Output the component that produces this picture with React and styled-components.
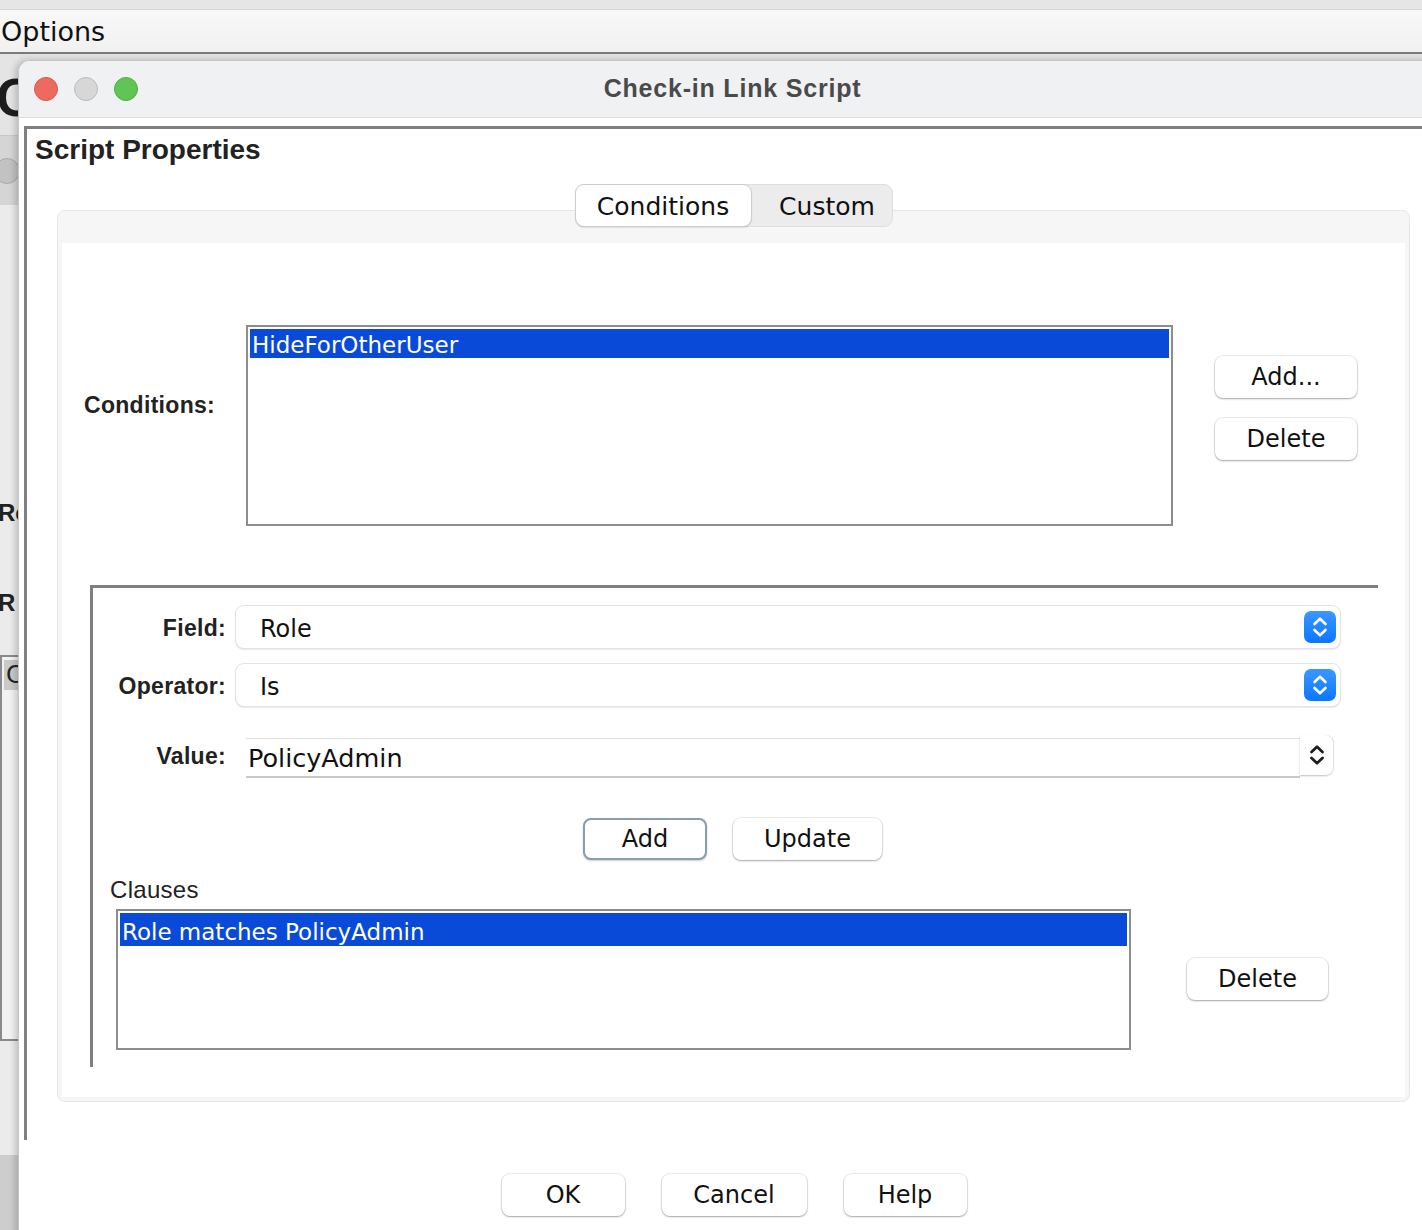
import React from 'react';
import styled, { createGlobalStyle, css } from 'styled-components';

const Global = createGlobalStyle`
  html, body { margin: 0; padding: 0; }
  body {
    width: 1422px; height: 1230px; overflow: hidden;
    background: #e2e2e2;
    font-family: "DejaVu Sans", "Liberation Sans", sans-serif;
  }
  * { box-sizing: border-box; }
`;

const Desktop = styled.div`
  position: relative;
  width: 1422px;
  height: 1230px;
  overflow: hidden;
  background: #e2e2e2;
`;

/* ---------- background window ---------- */
const BackWindow = styled.div`
  display: flex;
  flex-direction: column;
  height: 100%;
`;
const TopStrip = styled.div`
  height: 10px;
  background: #e6e6e6;
  border-bottom: 1px solid #d4d4d4;
`;
const MenuBar = styled.div`
  height: 44px;
  background: linear-gradient(#f8f8f8, #f1f1f1);
  border-bottom: 2px solid #7b7b7b;
  display: flex;
  align-items: center;
  padding-left: 1px;
  font: 27px "DejaVu Sans", sans-serif;
  color: #111;
`;
const BackColumn = styled.div`
  flex: 1;
  width: 20px;
  overflow: hidden;
  display: flex;
  flex-direction: column;
  background: #e4e4e4;
`;
const BackHead = styled.div`
  height: 81px;
  display: flex;
  align-items: center;
  padding-top: 4px;
  font: bold 54px "Liberation Sans", sans-serif;
  color: #1d1d1d;
  margin-left: -4px;
`;
const BackToolbar = styled.div`
  height: 70px;
  background: #d5d5d5;
  border-top: 1px solid #c8c8c8;
  display: flex;
  align-items: center;
`;
const BackCircle = styled.span`
  width: 26px; height: 26px;
  margin-left: -6px;
  border-radius: 50%;
  background: #c2c2c2;
  border: 1px solid #a9a9a9;
`;
const BackPanel = styled.div`
  height: 950px;
  background: #ebebeb;
  display: flex;
  flex-direction: column;
`;
const BackLabel = styled.div`
  font: bold 24px "Liberation Sans", sans-serif;
  color: #222;
  height: 28px;
  line-height: 28px;
  margin-top: ${p => p.$top}px;
  margin-left: -2px;
`;
const BackBox = styled.div`
  margin-top: 38px;
  height: 386px;
  border: 2px solid #8a8a8a;
  border-right: none;
  background: #f2f2f2;
  padding: 3px 0 0 2px;
`;
const BackRow = styled.div`
  height: 30px;
  background: #c9c9c9;
  font: 24px "DejaVu Sans", sans-serif;
  line-height: 30px;
  color: #222;
  padding-left: 2px;
`;
const BackFooter = styled.div`
  flex: 1;
  background: #cdcdcd;
`;

/* ---------- dialog ---------- */
const Dialog = styled.div`
  position: absolute;
  left: 18px;
  top: 60px;
  width: 1429px;
  height: 1190px;
  background: #ffffff;
  border: 1px solid #c6c6c6;
  border-radius: 12px 12px 0 0;
  box-shadow: -3px 0 6px rgba(0, 0, 0, 0.18);
  display: flex;
  flex-direction: column;
  overflow: hidden;
`;
const TitleBar = styled.div`
  flex: none;
  height: 57px;
  background: #f0f1f3;
  border-bottom: 1px solid #dadada;
  display: grid;
  grid-template-columns: 1fr auto 1fr;
  align-items: center;
`;
const Lights = styled.div`
  display: flex;
  gap: 16px;
  padding-left: 15px;
`;
const Light = styled.span`
  width: 24px;
  height: 24px;
  border-radius: 50%;
  background: ${p => p.$c};
  border: 1px solid ${p => p.$b};
`;
const Title = styled.div`
  font: bold 25px "Liberation Sans", sans-serif;
  letter-spacing: 0.8px;
  color: #4a4a4a;
  padding-bottom: 2px;
`;
const Body = styled.div`
  flex: none;
  padding: 8px 0 0 5px;
`;
const Frame = styled.div`
  height: 1014px;
  border-top: 3px solid #808080;
  border-left: 3px solid #808080;
  padding: 5px 0 0 8px;
  display: flex;
  flex-direction: column;
`;
const FrameTitle = styled.div`
  font: bold 28px "Liberation Sans", sans-serif;
  line-height: 32px;
  color: #222;
`;
const TabArea = styled.div`
  width: 1353px;
  margin: 18px 0 0 22px;
  display: flex;
  flex-direction: column;
`;
const Segmented = styled.div`
  align-self: center;
  display: flex;
  height: 43px;
  border-radius: 9px;
  background: #ececec;
  border: 1px solid #dedede;
  position: relative;
  z-index: 1;
`;
const Tab = styled.div`
  width: ${p => p.$w}px;
  display: flex;
  align-items: center;
  justify-content: center;
  padding: 2px 0 0 ${p => p.$pl || 0}px;
  font: 25px "DejaVu Sans", sans-serif;
  color: #111;
  border-radius: 8px;
  ${p => p.$active && css`
    background: #ffffff;
    box-shadow: 0 0 0 1px #cdcdcd, 0 1px 2px rgba(0, 0, 0, 0.3);
  `}
`;
const Pane = styled.div`
  margin-top: -17px;
  height: 892px;
  background: #f6f6f6;
  border: 1px solid #e6e6e6;
  border-radius: 8px;
  padding: 32px 4px 4px 4px;
  display: flex;
`;
const PaneContent = styled.div`
  flex: 1;
  background: #ffffff;
  display: flex;
  flex-direction: column;
`;
const ConditionsRow = styled.div`
  display: flex;
  align-items: flex-start;
  margin-top: 82px;
  padding-left: 22px;
`;
const SideLabel = styled.div`
  width: 162px;
  margin-top: 66px;
  font: bold 23px "Liberation Sans", sans-serif;
  letter-spacing: 0.3px;
  line-height: 28px;
  color: #222;
`;
const ListBox = styled.div`
  width: ${p => p.$w}px;
  height: ${p => p.$h}px;
  border: 2px solid #8d8d8d;
  padding: 2px;
  background: #fff;
`;
const ListItem = styled.div`
  height: ${p => p.$h}px;
  display: flex;
  align-items: center;
  padding: ${p => p.$pt}px 0 0 2px;
  background: #0a4ad8;
  color: #fff;
  font: 23px "DejaVu Sans", sans-serif;
  white-space: nowrap;
`;
const ButtonColumn = styled.div`
  display: flex;
  flex-direction: column;
  gap: 20px;
  margin: 31px 0 0 42px;
`;
const Button = styled.div`
  width: ${p => p.$w}px;
  height: 42px;
  display: flex;
  align-items: center;
  justify-content: center;
  background: #fff;
  border-radius: 8px;
  font: 24px "DejaVu Sans", sans-serif;
  color: #111;
  box-shadow: 0 0 0 1px rgba(0, 0, 0, 0.07), 0 1px 2px rgba(0, 0, 0, 0.3);
  ${p => p.$default && css`
    border: 2px solid #8b9bb4;
    box-shadow: 0 1px 2px rgba(0, 0, 0, 0.2);
  `}
`;
const Editor = styled.div`
  width: 1288px;
  height: 482px;
  margin: 59px 0 0 28px;
  border-top: 3px solid #7f7f7f;
  border-left: 3px solid #7f7f7f;
  padding-top: 18px;
  display: flex;
  flex-direction: column;
`;
const FormRow = styled.div`
  display: flex;
  align-items: center;
  margin-top: ${p => p.$top || 0}px;
`;
const FormLabel = styled.div`
  width: 133px;
  margin-right: ${p => p.$gap}px;
  padding-top: ${p => p.$pt || 0}px;
  text-align: right;
  font: bold 23px "Liberation Sans", sans-serif;
  letter-spacing: 0.3px;
  color: #222;
`;
const Select = styled.div`
  width: 1104px;
  height: 42px;
  display: flex;
  align-items: center;
  justify-content: space-between;
  padding: 0 4px 0 24px;
  background: #fff;
  border-radius: 8px;
  box-shadow: 0 0 0 1px #e3e3e3, 0 1px 2px rgba(0, 0, 0, 0.28);
  font: 24px "DejaVu Sans", sans-serif;
  color: #111;
`;
const SelectText = styled.span`
  padding-top: 3px;
`;
const BlueStepper = styled.span`
  width: 32px;
  height: 32px;
  border-radius: 7px;
  background: linear-gradient(#3c97ff, #0a77ff);
  display: flex;
  align-items: center;
  justify-content: center;
`;
const Combo = styled.div`
  display: flex;
  align-items: flex-start;
  height: 42px;
`;
const TextField = styled.div`
  width: 1054px;
  height: 40px;
  margin-top: 3px;
  border-top: 1px solid #e2e2e2;
  border-bottom: 2px solid #c9c9c9;
  padding: 0 0 0 2px;
  display: flex;
  align-items: center;
  font: 25.5px "DejaVu Sans", sans-serif;
  color: #111;
`;
const PlainStepper = styled.span`
  width: 33px;
  height: 40px;
  background: #fff;
  border-radius: 0 8px 8px 0;
  box-shadow: 1px 0 0 #e2e2e2, 0 1px 2px rgba(0, 0, 0, 0.25);
  display: flex;
  align-items: center;
  justify-content: center;
`;
const ButtonRow = styled.div`
  display: flex;
  justify-content: center;
  gap: ${p => p.$gap}px;
  margin-top: ${p => p.$top}px;
  padding-right: ${p => p.$shift || 0}px;
`;
const ClausesLabel = styled.div`
  margin: 17px 0 0 17px;
  font: 24px "Liberation Sans", sans-serif;
  letter-spacing: 0.3px;
  line-height: 25px;
  color: #222;
`;
const ClausesRow = styled.div`
  display: flex;
  align-items: flex-start;
  margin: 7px 0 0 23px;
`;
const SideButton = styled.div`
  margin: ${p => p.$top}px 0 0 ${p => p.$left}px;
`;

const Chevrons = ({ color, w = 2.6 }) => (
  <svg width="26" height="26" viewBox="0 0 26 26" fill="none">
    <path d="M7.5 10 L13 4.8 L18.5 10" stroke={color} strokeWidth={w} strokeLinecap="round" strokeLinejoin="round" />
    <path d="M7.5 16 L13 21.2 L18.5 16" stroke={color} strokeWidth={w} strokeLinecap="round" strokeLinejoin="round" />
  </svg>
);

export default function App() {
  return (
    <Desktop>
      <Global />
      <BackWindow>
        <TopStrip />
        <MenuBar>Options</MenuBar>
        <BackColumn>
          <BackHead>C</BackHead>
          <BackToolbar><BackCircle /></BackToolbar>
          <BackPanel>
            <BackLabel $top={294}>Re</BackLabel>
            <BackLabel $top={62}>R</BackLabel>
            <BackBox>
              <BackRow>C</BackRow>
            </BackBox>
          </BackPanel>
          <BackFooter />
        </BackColumn>
      </BackWindow>

      <Dialog>
        <TitleBar>
          <Lights>
            <Light $c="#ee6a5f" $b="#d65a4f" />
            <Light $c="#d7d7d7" $b="#bcbcbc" />
            <Light $c="#60c554" $b="#4fae44" />
          </Lights>
          <Title>Check-in Link Script</Title>
          <div />
        </TitleBar>
        <Body>
          <Frame>
            <FrameTitle>Script Properties</FrameTitle>
            <TabArea>
              <Segmented>
                <Tab $w={175} $active>Conditions</Tab>
                <Tab $w={141} $pl={12}>Custom</Tab>
              </Segmented>
              <Pane>
                <PaneContent>
                  <ConditionsRow>
                    <SideLabel>Conditions:</SideLabel>
                    <ListBox $w={927} $h={201}>
                      <ListItem $h={29} $pt={3}>HideForOtherUser</ListItem>
                    </ListBox>
                    <ButtonColumn>
                      <Button $w={142}>Add...</Button>
                      <Button $w={142}>Delete</Button>
                    </ButtonColumn>
                  </ConditionsRow>

                  <Editor>
                    <FormRow>
                      <FormLabel $gap={10} $pt={2}>Field:</FormLabel>
                      <Select>
                        <SelectText>Role</SelectText>
                        <BlueStepper><Chevrons color="#ffffff" /></BlueStepper>
                      </Select>
                    </FormRow>
                    <FormRow $top={16}>
                      <FormLabel $gap={10} $pt={2}>Operator:</FormLabel>
                      <Select>
                        <SelectText>Is</SelectText>
                        <BlueStepper><Chevrons color="#ffffff" /></BlueStepper>
                      </Select>
                    </FormRow>
                    <FormRow $top={29}>
                      <FormLabel $gap={20}>Value:</FormLabel>
                      <Combo>
                        <TextField>PolicyAdmin</TextField>
                        <PlainStepper><Chevrons color="#1e1e1e" w={2.8} /></PlainStepper>
                      </Combo>
                    </FormRow>
                    <ButtonRow $gap={26} $top={41} $shift={6}>
                      <Button $w={124} $default>Add</Button>
                      <Button $w={149}>Update</Button>
                    </ButtonRow>
                    <ClausesLabel>Clauses</ClausesLabel>
                    <ClausesRow>
                      <ListBox $w={1015} $h={141}>
                        <ListItem $h={33} $pt={5}>Role matches PolicyAdmin</ListItem>
                      </ListBox>
                      <SideButton $top={49} $left={56}>
                        <Button $w={141}>Delete</Button>
                      </SideButton>
                    </ClausesRow>
                  </Editor>
                </PaneContent>
              </Pane>
            </TabArea>
          </Frame>
          <ButtonRow $gap={37} $top={34} $shift={2}>
            <Button $w={123}>OK</Button>
            <Button $w={145}>Cancel</Button>
            <Button $w={123}>Help</Button>
          </ButtonRow>
        </Body>
      </Dialog>
    </Desktop>
  );
}
